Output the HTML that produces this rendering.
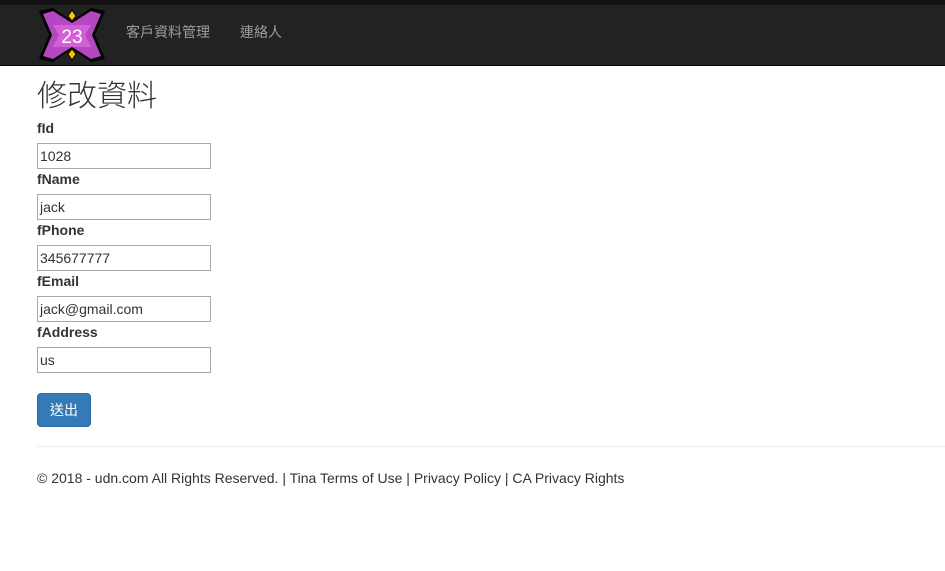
<!DOCTYPE html>
<html><head><meta charset="utf-8"><style>
*{box-sizing:border-box;margin:0;padding:0}
body{width:945px;height:571px;background:#fff;font-family:"Liberation Sans","Noto Sans CJK TC",sans-serif;font-size:14px;color:#333;position:relative;overflow:hidden}
.top{position:absolute;left:0;top:0;width:945px;height:5px;background:#111}
.nav{position:absolute;left:0;top:5px;width:945px;height:61px;background:#222;border-bottom:1px solid #080808}
.nav a{position:absolute;top:17px;color:#9d9d9d;font-size:14px;text-decoration:none}
h2{position:absolute;left:37px;top:71px;font-size:30px;font-weight:300;color:#333;font-family:"Liberation Sans","Noto Sans CJK TC",sans-serif}
label{position:absolute;left:37px;font-weight:bold;font-size:14px}
.in{position:absolute;left:37px;width:174px;height:26px;border:1px solid #a9a9a9;padding:3px 2px;font-size:14px;color:#333;line-height:18px}
.btn{position:absolute;left:37px;top:393px;width:54px;height:34px;background:#337ab7;border:1px solid #2e6da4;border-radius:4px;color:#fff;font-size:14px;text-align:center;line-height:32px}
hr{position:absolute;left:37px;top:446px;width:908px;border:0;border-top:1px solid #eee}
.f{position:absolute;left:37px;top:470px;font-size:14px}
</style></head><body>
<div class="top"></div>
<div class="nav">
<svg style="position:absolute;left:37px;top:2px" width="70" height="56" viewBox="0 0 70 56">
<polygon points="2,4 16,1 35,14 54,1 68,4 58,28 68,52 54,55 35,42 16,55 2,52 12,28" fill="#000"/>
<polygon points="6,7 16,4 35,16 54,4 64,7 55,28 64,49 54,52 35,40 16,52 6,49 15,28" fill="#b548c0"/>
<polygon points="16,18 54,18 48,28 54,40 16,40 22,28" fill="#d460d8"/>
<polygon points="35,3 39,9 35,14 31,9" fill="#f5c400" stroke="#000"/>
<polygon points="35,42 39,47 35,53 31,47" fill="#f5c400" stroke="#000"/>
<text x="35" y="36" font-size="19" fill="#fff" text-anchor="middle" font-family="Liberation Sans,sans-serif">23</text>
</svg>
<a style="left:126px">客戶資料管理</a>
<a style="left:240px">連絡人</a>
</div>
<h2>修改資料</h2>
<label style="top:120px">fId</label><div class="in" style="top:143px">1028</div>
<label style="top:171px">fName</label><div class="in" style="top:194px">jack</div>
<label style="top:222px">fPhone</label><div class="in" style="top:245px">345677777</div>
<label style="top:273px">fEmail</label><div class="in" style="top:296px">jack@gmail.com</div>
<label style="top:324px">fAddress</label><div class="in" style="top:347px">us</div>
<div class="btn">送出</div>
<hr>
<div class="f">© 2018 - udn.com All Rights Reserved. | Tina Terms of Use | Privacy Policy | CA Privacy Rights</div>
</body></html>
